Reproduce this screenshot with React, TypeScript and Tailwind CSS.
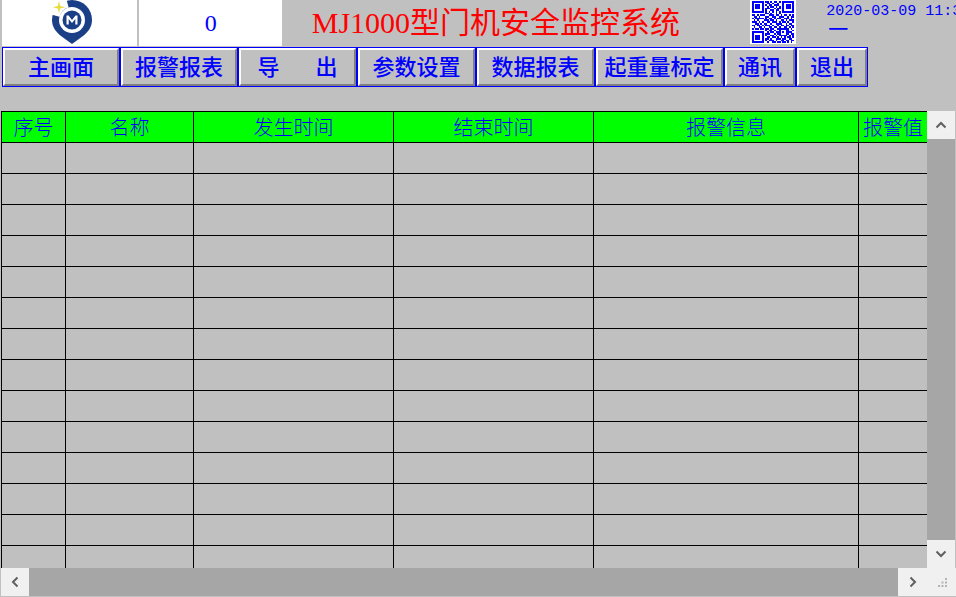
const buttons = [
  { label: "主画面", width: "w-[118px]", gap: "" },
  { label: "报警报表", width: "w-[118px]", gap: "" },
  { label: "导出", width: "w-[119px]", gap: "gap-[36px]" },
  { label: "参数设置", width: "w-[119px]", gap: "" },
  { label: "数据报表", width: "w-[119px]", gap: "" },
  { label: "起重量标定", width: "w-[129px]", gap: "" },
  { label: "通讯", width: "w-[72px]", gap: "" },
  { label: "退出", width: "w-[72px]", gap: "" },
];

const columns = [
  { label: "序号", width: "w-[64px]" },
  { label: "名称", width: "w-[128px]" },
  { label: "发生时间", width: "w-[200px]" },
  { label: "结束时间", width: "w-[200px]" },
  { label: "报警信息", width: "w-[265px]" },
  { label: "报警值", width: "w-[68px]" },
];

const rows = Array.from({ length: 14 }, (_, i) => i);

const qr = [
  "1111111011010110101111111",
  "1000001001101001001000001",
  "1011101010110111001011101",
  "1011101001011010101011101",
  "1011101011100101101011101",
  "1000001010011011001000001",
  "1111111010101010101111111",
  "0000000011010010100000000",
  "1101011100111011010110101",
  "0110100011001100111001011",
  "1011111010110101100111010",
  "0101000111011010011010111",
  "1110101001101110101101001",
  "0011010110010011110010110",
  "1101101011101001011011011",
  "0100110100110110100110101",
  "1011011011011001111111010",
  "0000000010110100100011001",
  "1111111001011011101011110",
  "1000001011100101100011011",
  "1011101010011010111110101",
  "1011101001101101010101101",
  "1011101011010011101100110",
  "1000001010111010011011011",
  "1111111001001101101101010",
];

function Logo() {
  return (
    <svg width="42" height="44" viewBox="0 0 42 44">
      {/* pin body */}
      <path d="M20 0a20 20 0 0 1 20 20c0 7-4 12-9 16l-11 8-11-8c-5-4-9-9-9-16a20 20 0 0 1 20-20z" fill="#1b3f86" />
      <circle cx="20" cy="20" r="13" fill="#fff" />
      <circle cx="20" cy="20" r="9.500" fill="#1b3f86" />
      {/* gap in the ring, upper left */}
      <path d="M3.600 15.600A17 17 0 0 1 15.600 3.600" stroke="#fff" strokeWidth="8" fill="none" />
      <path d="M14.500 24.500v-9h2l3.500 4.500 3.500-4.500h2v9h-2.200v-5.500l-3.300 4-3.300-4v5.500z" fill="#fff" />
      {/* star */}
      <path d="M7 1l1.200 5 5 1.200-5 1.200L7 13.500 5.800 8.400l-5-1.200 5-1.200z" fill="#e8dc3c" />
    </svg>
  );
}

function QrCode() {
  return (
    <svg width="42" height="42" viewBox="0 0 25 25" shapeRendering="crispEdges">
      {qr.map((row, y) =>
        row.split("").map((cell, x) =>
          cell === "1" ? <rect key={`${x}-${y}`} x={x} y={y} width="1" height="1" fill="#0000ff" /> : null,
        ),
      )}
    </svg>
  );
}

function Chevron({ d }: { d: string }) {
  return (
    <svg width="12" height="12" viewBox="0 0 12 12" fill="none">
      <path d={d} stroke="#606060" strokeWidth="2" />
    </svg>
  );
}

export default function App() {
  return (
    <div
      className="flex h-[597px] w-[956px] flex-col overflow-hidden bg-[#c0c0c0] pl-px"
      style={{ fontFamily: '"Noto Sans CJK SC", sans-serif' }}
    >
      {/* title row */}
      <div className="flex h-[47px] shrink-0">
        <div className="ml-px flex h-[46px] w-[135px] items-start justify-center bg-white pl-[8px]">
          <Logo />
        </div>
        <div className="ml-[2px] flex h-[46px] w-[143px] items-center justify-center bg-white pl-[1px] font-['Liberation_Serif'] text-2xl text-[#0000ff]">
          0
        </div>
        <div className="ml-[30px] w-[439px] whitespace-nowrap pt-[1px] text-[30px] leading-[38px] text-[#ff0000]">
          <span className="font-['Liberation_Serif']">MJ1000</span>型门机安全监控系统
        </div>
        <div className="flex h-[44px] w-[46px] items-center justify-center bg-white">
          <QrCode />
        </div>
        <div className="ml-[30px] w-[130px] overflow-hidden whitespace-nowrap pt-[4px] font-['Liberation_Mono'] text-[15px] leading-[15px] text-[#0000ff]">
          <div>2020-03-09 11:31</div>
          <div className="pl-[2px] font-['Noto_Sans_CJK_SC'] text-[20px] leading-[20px]">一</div>
        </div>
      </div>

      {/* menu buttons */}
      <div className="ml-px flex h-[40px] shrink-0">
        {buttons.map((b) => (
          <div key={b.label} className={`${b.width} border border-[#0000ff] bg-[#0000ff]`}>
            <div
              className={`${b.gap} flex h-full items-center justify-center whitespace-nowrap border-2 border-b-[#808080] border-l-white border-r-[#808080] border-t-white bg-[#c0c0c0] pb-[3px] text-[22px] font-medium text-[#0000ff]`}
            >
              {b.gap ? b.label.split("").map((ch) => <span key={ch}>{ch}</span>) : b.label}
            </div>
          </div>
        ))}
      </div>

      <div className="h-[24px] shrink-0" />

      {/* alarm table */}
      <div className="flex min-h-0 flex-1 flex-col">
        <div className="flex h-[457px] shrink-0">
          <div className="w-[926px] overflow-hidden border-l border-black">
            <div className="flex h-[32px] border-y border-black bg-[#00ff00]">
              {columns.map((c, i) => (
                <div
                  key={c.label}
                  className={`${c.width} ${i === 5 ? "" : "border-r border-black"} flex shrink-0 items-center justify-center whitespace-nowrap text-[20px] font-light text-[#0000ff]`}
                >
                  {c.label}
                </div>
              ))}
            </div>
            {rows.map((r) => (
              <div key={r} className="flex h-[31px] border-b border-black">
                {columns.map((c, i) => (
                  <div key={c.label} className={`${c.width} ${i === 5 ? "" : "border-r border-black"} shrink-0`} />
                ))}
              </div>
            ))}
          </div>
          {/* vertical scrollbar */}
          <div className="flex w-[28px] flex-col bg-[#a6a6a6]">
            <div className="flex h-[28px] items-center justify-center bg-[#f0f0f0]">
              <Chevron d="M1.500 8.500 6 4l4.500 4.500" />
            </div>
            <div className="flex-1" />
            <div className="flex h-[28px] items-center justify-center bg-[#f0f0f0]">
              <Chevron d="M1.500 3.500 6 8l4.500-4.500" />
            </div>
          </div>
        </div>
        {/* horizontal scrollbar */}
        <div className="flex h-[28px] shrink-0 bg-[#a6a6a6]">
          <div className="flex w-[28px] items-center justify-center bg-[#f0f0f0]">
            <Chevron d="M8.500 1.500 4 6l4.500 4.500" />
          </div>
          <div className="flex-1" />
          <div className="flex w-[30px] items-center justify-center bg-[#f0f0f0]">
            <Chevron d="M3.500 1.500 8 6l-4.500 4.500" />
          </div>
          <div className="flex w-[28px] items-end justify-end bg-[#f0f0f0] pb-[8px] pr-[8px]">
            <svg width="10" height="10" viewBox="0 0 10 10" fill="#b4b4b4">
              <rect x="7" y="0" width="2" height="2" />
              <rect x="3.500" y="3.500" width="2" height="2" />
              <rect x="7" y="3.500" width="2" height="2" />
              <rect x="0" y="7" width="2" height="2" />
              <rect x="3.500" y="7" width="2" height="2" />
              <rect x="7" y="7" width="2" height="2" />
            </svg>
          </div>
        </div>
      </div>
    </div>
  );
}
